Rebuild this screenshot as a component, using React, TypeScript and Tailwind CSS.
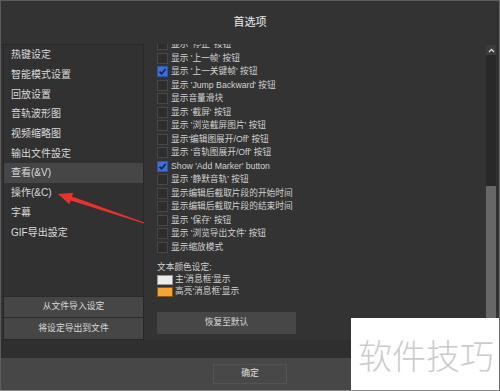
import React from "react";

const leftItems = [
  "热键设定",
  "智能模式设置",
  "回放设置",
  "音轨波形图",
  "视频缩略图",
  "输出文件設定",
  "查看(&V)",
  "操作(&C)",
  "字幕",
  "GIF导出設定",
];

const options: { label: string; checked?: boolean }[] = [
  { label: "显示 '停止' 按钮" },
  { label: "显示 '上一帧' 按钮" },
  { label: "显示 '上一关键帧' 按钮", checked: true },
  { label: "显示 'Jump Backward' 按钮" },
  { label: "显示音量滑块" },
  { label: "显示 '截屏' 按钮" },
  { label: "显示 '浏览截屏图片' 按钮" },
  { label: "显示'编辑图展开/Off' 按钮" },
  { label: "显示 '音轨图展开/Off' 按钮" },
  { label: "Show 'Add Marker' button", checked: true },
  { label: "显示 '静默音轨' 按钮" },
  { label: "显示编辑后截取片段的开始时间" },
  { label: "显示编辑后截取片段的结束时间" },
  { label: "显示 '保存' 按钮" },
  { label: "显示 '浏览导出文件' 按钮" },
  { label: "显示缩放模式" },
];

function Checkbox({ checked }: { checked?: boolean }) {
  if (checked) {
    return (
      <div className="w-[11px] h-[11px] bg-[#3f6fd6] border border-[#2f55a8] flex items-center justify-center shrink-0">
        <svg width="9" height="9" viewBox="0 0 9 9">
          <path d="M1.5 4.6 L3.6 6.8 L7.6 2" fill="none" stroke="#12224f" strokeWidth="1.6" />
        </svg>
      </div>
    );
  }
  return <div className="w-[11px] h-[11px] bg-[#2d2d2d] border border-[#474747] shrink-0" />;
}

export default function App() {
  return (
    <div className="relative w-[500px] h-[391px] overflow-hidden bg-[#333333] border border-[#5c5c5c] border-b-[#8a8a8a] border-r-[#6a6a6a] flex flex-col font-['Liberation_Sans','Noto_Sans_CJK_SC',sans-serif] text-[#d6d6d6]">
      <div className="h-[43px] shrink-0 flex items-center justify-center text-[11px] text-[#eeeeee]">
        首选项
      </div>

      <div className="h-[296px] shrink-0 flex">
        {/* left navigation */}
        <div className="ml-[2px] w-[141px] flex flex-col bg-[#313131] border border-[#272727]">
          {leftItems.map((item, i) => (
            <div
              key={item}
              className={
                "h-[19.7px] flex items-center pl-[7px] text-[10px] text-[#dcdcdc] " +
                (i === 6 ? "bg-[#464646]" : "")
              }
            >
              {item}
            </div>
          ))}
          <div className="flex-1" />
          <div className="h-[21.5px] flex items-center justify-center bg-[#464646] border-t border-b border-[#2b2b2b] text-[8.8px] text-[#dadada]">
            从文件导入设定
          </div>
          <div className="h-[21.5px] flex items-center justify-center bg-[#464646] text-[8.8px] text-[#dadada]">
            将设定导出到文件
          </div>
        </div>

        {/* right settings list */}
        <div className="flex-1 flex overflow-hidden">
          <div className="flex-1 pl-[13px] overflow-hidden">
            <div className="-mt-[6px] flex flex-col">
              {options.map((o) => (
                <div key={o.label} className="h-[13.5px] flex items-center gap-[3px] text-[8.7px] text-[#d2d2d2] whitespace-nowrap">
                  <Checkbox checked={o.checked} />
                  <span>{o.label}</span>
                </div>
              ))}
              <div className="mt-[8px] h-[12px] flex items-center text-[8.7px] text-[#d2d2d2]">文本颜色设定:</div>
              <div className="h-[12px] flex items-center gap-[2px] text-[8.7px] text-[#d2d2d2]">
                <div className="w-[16px] h-[10px] bg-[#ececec] border border-[#9a9a9a]" />
                <span>主'消息框'显示</span>
              </div>
              <div className="h-[12px] flex items-center gap-[2px] text-[8.7px] text-[#d2d2d2]">
                <div className="w-[16px] h-[10px] bg-[#f5a530] border border-[#8a5a10]" />
                <span>高亮'消息框'显示</span>
              </div>
              <div className="mt-[14px] w-[139px] h-[22px] flex items-center justify-center bg-[#474747] text-[8.7px] text-[#d8d8d8]">
                恢复至默认
              </div>
            </div>
          </div>
          {/* scrollbar */}
          <div className="w-[10px] mr-[3px] mt-[1px] flex flex-col">
            <div className="h-[10px] bg-[#3c3c3c] flex items-center justify-center">
              <svg width="7" height="5" viewBox="0 0 7 5">
                <path d="M1 4 L3.5 1.3 L6 4" fill="none" stroke="#e0e0e0" strokeWidth="1.2" />
              </svg>
            </div>
            <div className="h-[131px] bg-[#282828]" />
            <div className="flex-1 bg-[#676767]" />
          </div>
        </div>
      </div>

      <div className="h-[18px] shrink-0 bg-[#2f2f2f]" />

      <div className="flex-1 bg-[#474747] flex justify-center pt-[6px]">
        <div className="w-[74px] h-[20px] flex items-center justify-center border border-[#545454] bg-[#484848] text-[8.8px] text-[#e0e0e0]">
          确定
        </div>
      </div>

      {/* watermark */}
      <div className="absolute left-[350px] top-[317px] w-[150px] h-[74px] bg-white flex items-center justify-center">
        <span className="text-[34px] leading-none text-[#cccccc] font-['Noto_Sans_CJK_SC',sans-serif] font-light">软件技巧</span>
      </div>

      {/* red annotation arrow */}
      <svg className="absolute left-0 top-0 pointer-events-none" width="500" height="391" viewBox="0 0 500 391">
        <polygon
          points="143.2,221.5 70.9,195.6 72.2,191.8 57,193 68.4,203.2 69.7,199.4 142.8,222.5"
          fill="#e8322b"
        />
      </svg>
    </div>
  );
}
